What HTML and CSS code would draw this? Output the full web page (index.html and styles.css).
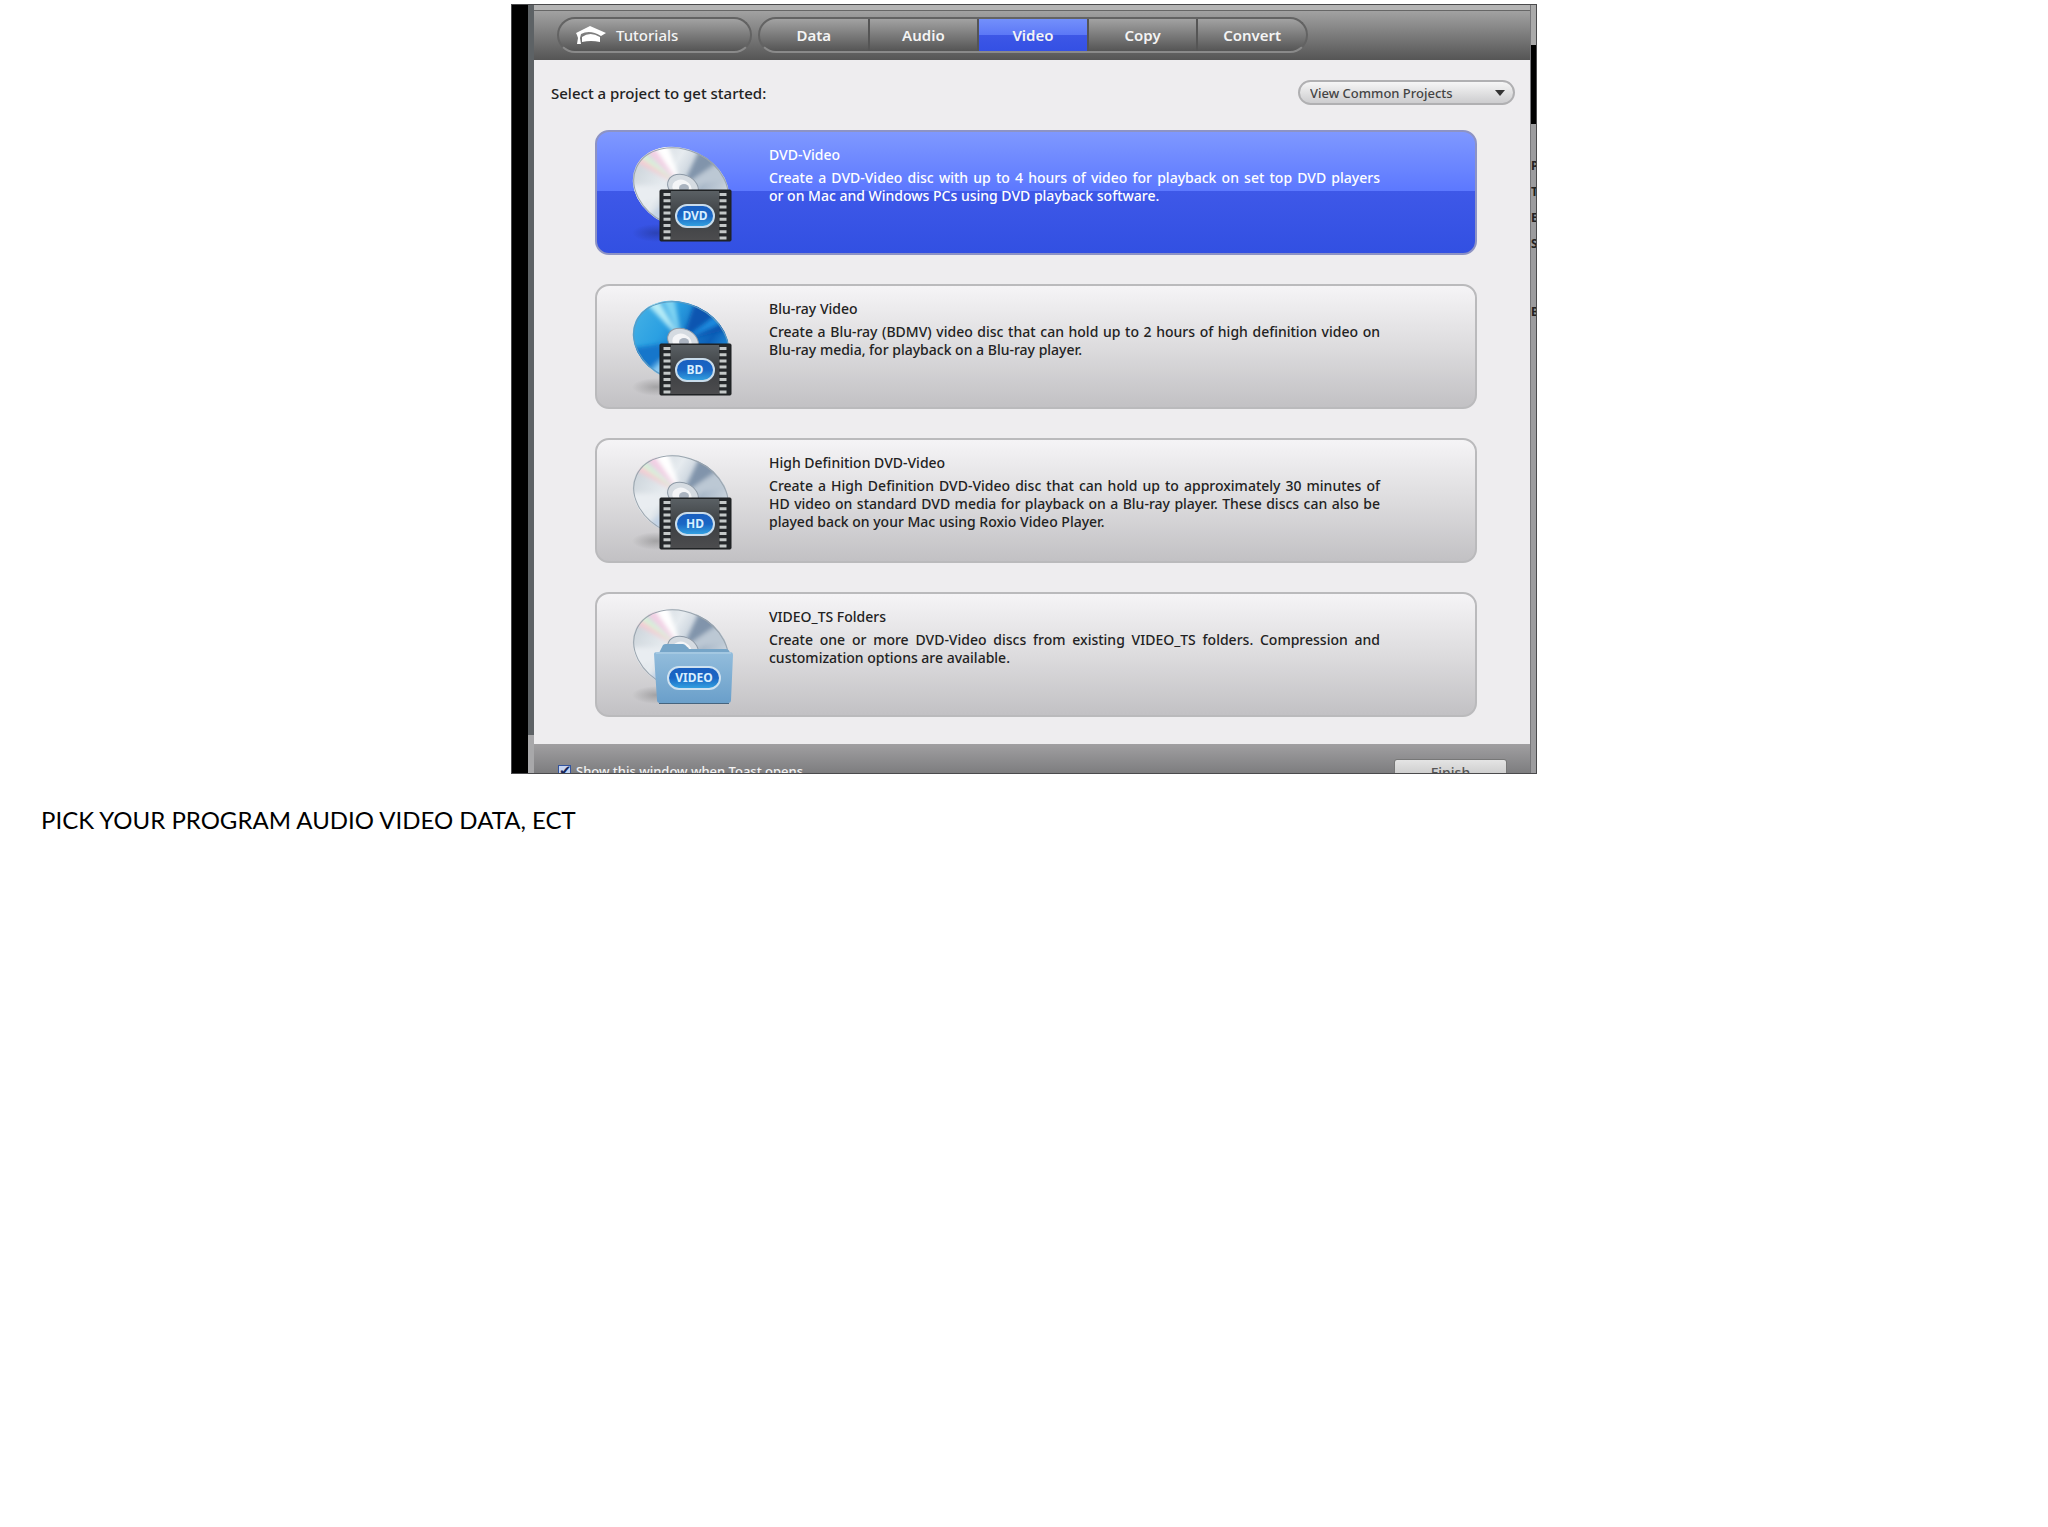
FILE: index.html
```html
<!DOCTYPE html>
<html lang="en">
<head>
    <meta charset="UTF-8">
    <meta name="viewport" content="width=device-width, initial-scale=1.0">
    <title>Pick your program</title>
    <link rel="stylesheet" href="styles.css">
</head>
<body>

    <!-- Shared icon parts -->
    <svg class="defs" width="0" height="0" aria-hidden="true">
        <defs>
            <linearGradient id="silver" x1="0" y1="0" x2="1" y2="0.6">
                <stop offset="0" stop-color="#c3ccd3"/>
                <stop offset="0.4" stop-color="#e6ebef"/>
                <stop offset="0.7" stop-color="#a9b8c8"/>
                <stop offset="1" stop-color="#dfe5ea"/>
            </linearGradient>
            <linearGradient id="blue" x1="0" y1="0" x2="1" y2="0.6">
                <stop offset="0" stop-color="#49b4e6"/>
                <stop offset="0.35" stop-color="#2ba0e2"/>
                <stop offset="0.75" stop-color="#0c60b8"/>
                <stop offset="1" stop-color="#2a9fe6"/>
            </linearGradient>
            <linearGradient id="pill" x1="0" y1="0" x2="0" y2="1">
                <stop offset="0" stop-color="#1a5fc0"/>
                <stop offset="0.5" stop-color="#1a66c4"/>
                <stop offset="1" stop-color="#35a5e2"/>
            </linearGradient>
            <linearGradient id="filmBase" x1="0" y1="0" x2="0" y2="1">
                <stop offset="0" stop-color="#5a6064"/>
                <stop offset="0.5" stop-color="#3c3f42"/>
                <stop offset="1" stop-color="#4c4c4e"/>
            </linearGradient>
            <linearGradient id="folderFront" x1="0" y1="0" x2="0" y2="1">
                <stop offset="0" stop-color="#93bddc"/>
                <stop offset="1" stop-color="#6a9fca"/>
            </linearGradient>
            <radialGradient id="shade">
                <stop offset="0" stop-color="#000" stop-opacity="0.2"/>
                <stop offset="1" stop-color="#000" stop-opacity="0"/>
            </radialGradient>
            <filter id="soft"><feGaussianBlur stdDeviation="2"/></filter>
            <clipPath id="discClip"><ellipse cx="49" cy="43" rx="50" ry="39" transform="rotate(25 49 43)"/></clipPath>

            <g id="hub">
                <ellipse cx="51" cy="42" rx="16" ry="12" transform="rotate(25 51 42)" fill="#d5dbe1" stroke="#8d99a6"/>
                <ellipse cx="50" cy="43" rx="10" ry="8" transform="rotate(25 50 43)" fill="#f4f5f7"/>
                <ellipse cx="52" cy="43" rx="5" ry="4" fill="#aab3bf"/>
            </g>
            <g id="silverDisc">
                <ellipse cx="24" cy="88" rx="24" ry="9" fill="url(#shade)"/>
                <g clip-path="url(#discClip)">
                    <rect width="102" height="98" fill="url(#silver)"/>
                    <g filter="url(#soft)">
                        <path d="M50 42 18 -4 34 -6Z" fill="#fff"/>
                        <path d="M50 42 12 4 19 -2Z" fill="#f3cfe4"/>
                        <path d="M50 42 2 16 6 9Z" fill="#f6cbd3"/>
                        <path d="M50 42 6 11 10 6Z" fill="#d8f3d9"/>
                        <path d="M50 42 68 4 90 14Z" fill="#8194ab"/>
                        <path d="M50 42 90 16 104 34Z" fill="#bcc8d4"/>
                        <path d="M50 42 -4 40 0 64Z" fill="#e9edf1"/>
                        <path d="M50 42 12 76 32 90Z" fill="#c3d3e6"/>
                    </g>
                </g>
                <ellipse cx="49" cy="43" rx="49" ry="38" transform="rotate(25 49 43)" fill="none" stroke="#9aa4ad"/>
                <use href="#hub"/>
            </g>
            <g id="blueDisc">
                <ellipse cx="24" cy="88" rx="24" ry="9" fill="url(#shade)"/>
                <g clip-path="url(#discClip)">
                    <rect width="102" height="98" fill="url(#blue)"/>
                    <g filter="url(#soft)">
                        <path d="M50 42 14 4 24 -4Z" fill="#b6ecf7"/>
                        <path d="M50 42 30 0 42 -2Z" fill="#7fd3f2"/>
                        <path d="M50 42 64 0 98 30Z" fill="#0a55b0"/>
                        <path d="M50 42 84 16 94 22Z" fill="#1b8ade"/>
                        <path d="M50 42 -6 50 8 76Z" fill="#1676cb"/>
                        <path d="M50 42 12 78 34 92Z" fill="#8cc9f3"/>
                    </g>
                </g>
                <ellipse cx="49" cy="43" rx="49" ry="38" transform="rotate(25 49 43)" fill="none" stroke="#5d9ac0"/>
                <use href="#hub"/>
            </g>
            <g id="film">
                <rect x="28" y="45" width="71" height="51" rx="1" fill="#25282b"/>
                <rect x="39" y="46" width="48" height="49" fill="url(#filmBase)"/>
                <path d="M35 48V95M91 48V95" stroke="#c4c8c8" stroke-width="7" stroke-dasharray="3 3.2"/>
                <rect x="28" y="45" width="71" height="51" rx="1" fill="none" stroke="#1c1e20"/>
                <rect x="44" y="60" width="38" height="22" rx="11" fill="url(#pill)" stroke="#c9dceb" stroke-width="2"/>
            </g>
            <g id="folder">
                <path d="M26 48 31 38Q32 37 34 37H51Q53 37 55 40L57 42H94Q97 42 98 46V60H26Z" fill="#76a5c8"/>
                <path d="M22 47Q22 45 25 45H98Q101 45 101 48L99 93Q99 96 96 96H28Q25 96 25 93Z" fill="url(#folderFront)"/>
                <path d="M27 96.500H97" stroke="#46647e"/>
                <path d="M24 46H99" stroke="#b4d3e8"/>
                <rect x="36" y="60" width="52" height="22" rx="11" fill="url(#pill)" stroke="#cfe2f0" stroke-width="2"/>
            </g>
        </defs>
    </svg>

    <main class="slide">
        <div class="screenshot">
            <div class="edge-black"></div>
            <div class="edge-left"></div>

            <div class="window">
                <nav class="toolbar">
                    <button class="tutorials" type="button">
                        <svg class="cap" viewBox="0 0 30 20" aria-hidden="true">
                            <path d="M0 8 14 1 30 8 25 11Q14 4 5 9L4 13 5 19H1L2 13 1 10Z" fill="#fff"/>
                            <path d="M6 12Q14 6 24 12V17Q15 15 6 17Z" fill="#fff"/>
                        </svg>
                        Tutorials
                    </button>
                    <div class="tabs">
                        <button class="tab" type="button">Data</button>
                        <button class="tab" type="button">Audio</button>
                        <button class="tab active" type="button">Video</button>
                        <button class="tab" type="button">Copy</button>
                        <button class="tab" type="button">Convert</button>
                    </div>
                </nav>

                <section class="content">
                    <div class="heading">
                        <label for="view">Select a project to get started:</label>
                        <div class="dropdown">
                            <select id="view">
                                <option>View Common Projects</option>
                            </select>
                        </div>
                    </div>

                    <div class="projects">
                        <button class="project selected" type="button">
                            <svg class="icon" viewBox="0 0 102 100" aria-hidden="true">
                                <use href="#silverDisc"/>
                                <use href="#film"/>
                                <text class="badge" x="63" y="75">DVD</text>
                            </svg>
                            <span class="details">
                                <span class="name">DVD-Video</span>
                                <span class="about">Create a DVD-Video disc with up to 4 hours of video for playback on set top DVD players <span class="keep">or on Mac</span> and Windows PCs using DVD playback software.</span>
                            </span>
                        </button>

                        <button class="project" type="button">
                            <svg class="icon" viewBox="0 0 102 100" aria-hidden="true">
                                <use href="#blueDisc"/>
                                <use href="#film"/>
                                <text class="badge" x="63" y="75">BD</text>
                            </svg>
                            <span class="details">
                                <span class="name">Blu-ray Video</span>
                                <span class="about">Create a Blu-ray (BDMV) video disc that can hold up to 2 hours of high definition video on <span class="keep">Blu-ray</span> media, for playback on a Blu-ray player.</span>
                            </span>
                        </button>

                        <button class="project" type="button">
                            <svg class="icon" viewBox="0 0 102 100" aria-hidden="true">
                                <use href="#silverDisc"/>
                                <use href="#film"/>
                                <text class="badge" x="63" y="75">HD</text>
                            </svg>
                            <span class="details">
                                <span class="name">High Definition DVD-Video</span>
                                <span class="about">Create a High Definition DVD-Video disc that can hold up to approximately 30 minutes of <span class="keep">HD video</span> on standard DVD media for playback on a Blu-ray player. These discs can also be <span class="keep">played back</span> on your Mac using Roxio Video Player.</span>
                            </span>
                        </button>

                        <button class="project" type="button">
                            <svg class="icon" viewBox="0 0 102 100" aria-hidden="true">
                                <use href="#silverDisc"/>
                                <use href="#folder"/>
                                <text class="badge" x="62" y="75">VIDEO</text>
                            </svg>
                            <span class="details">
                                <span class="name">VIDEO_TS Folders</span>
                                <span class="about">Create one or more DVD-Video discs from existing VIDEO_TS folders. Compression and customization options are available.</span>
                            </span>
                        </button>
                    </div>
                </section>

                <footer class="bottom">
                    <label class="show"><input type="checkbox" checked>Show this window when Toast opens</label>
                    <button class="finish" type="button">Finish</button>
                </footer>
            </div>

            <!-- Sliver of the window behind -->
            <div class="edge-right">
                <span>P</span>
                <span>T</span>
                <span>E</span>
                <span>S</span>
                <span class="last">B</span>
            </div>
        </div>

        <p class="caption">PICK YOUR PROGRAM AUDIO VIDEO DATA, ECT</p>
    </main>

</body>
</html>
```

FILE: styles.css
```css
* {
    box-sizing: border-box;
}
body {
    margin: 0;
    background: #fff;
    font-family: "Noto Sans", "Open Sans", sans-serif;
    font-size: 14px;
    color: #222;
}
button, select, input {
    font-family: inherit;
    margin: 0;
}
.defs {
    position: absolute;
}
.slide {
    padding-top: 4px;
}
.screenshot {
    display: flex;
    width: 100%;
    max-width: 1026px;
    aspect-ratio: 4 / 3;
    margin: 0 auto;
    border: 1px solid #4a4a4c;
    overflow: hidden;
}
.edge-black {
    width: 16px;
    background: #000;
}
.edge-left {
    width: 6px;
    background: linear-gradient(#5d6265 95%, #a8a8aa 95%);
}
.edge-right {
    width: 6px;
    padding-top: 148px;
    background: linear-gradient(#aaa 40px, #000 40px, #000 119px, #9c9c9e 119px);
    border-left: 1px solid #77777a;
    overflow: hidden;
    font-size: 12px;
    line-height: 26px;
    font-weight: bold;
}
.edge-right span {
    display: block;
}
.edge-right .last {
    margin-top: 42px;
}
.window {
    flex: 1;
    min-width: 0;
}

/* Toolbar */
.toolbar {
    display: flex;
    gap: 6px;
    height: 55px;
    padding: 6px 23px 0;
    border-top: 5px solid #b4b4b4;
    box-shadow: inset 0 1px #666;
    background: linear-gradient(#a3a3a3, #555);
}
.tutorials, .tabs {
    height: 36px;
    margin-top: 1px;
    border: 2px solid #636363;
    border-bottom-color: #8a8a8a;
    border-radius: 18px;
    background: linear-gradient(#a2a2a2, #555);
}
.tutorials {
    display: flex;
    align-items: center;
    gap: 10px;
    width: 195px;
    padding: 0 17px;
    color: #f4f4f4;
    font-size: 15px;
    font-weight: 500;
}
.cap {
    width: 30px;
    height: 20px;
}
.tabs {
    display: flex;
    flex: 0 1 550px;
    overflow: hidden;
}
.tab {
    flex: 1;
    padding: 0;
    border: 0;
    border-left: 2px solid #555;
    background: none;
    color: #f4f4f4;
    font-size: 15px;
    font-weight: 600;
}
.tab:first-child {
    border-left: 0;
}
.tab.active {
    background: linear-gradient(#7390fb, #5c78f6 50%, #3d57e6 50%, #3450e4);
}

/* Content */
.content {
    padding: 20px 15px 27px 17px;
    background: #eeedef;
}
.heading {
    display: flex;
    align-items: center;
    justify-content: space-between;
    font-weight: 500;
    font-size: 15px;
    line-height: 24px;
}
.dropdown {
    position: relative;
    width: 217px;
}
.dropdown::after {
    content: "";
    position: absolute;
    top: 10px;
    right: 10px;
    border: 5px solid transparent;
    border-top: 6px solid #333;
    border-bottom: 0;
}
select {
    appearance: none;
    display: block;
    width: 100%;
    height: 25px;
    padding: 0 10px;
    border: 2px solid #b0b0b2;
    border-radius: 13px;
    background: linear-gradient(#f6f6f6, #cdcdcf);
    color: #444;
    font-size: 13px;
    font-weight: 500;
}
.projects {
    display: flex;
    flex-direction: column;
    gap: 29px;
    padding: 25px 38px 0 44px;
}
.project {
    display: flex;
    align-items: flex-start;
    gap: 35px;
    min-height: 125px;
    padding: 13px 95px 8px 35px;
    border: 2px solid #bababc;
    border-radius: 14px;
    background: linear-gradient(#f5f4f6, #dddcde 50%, #c2c1c4);
    color: #222;
    text-align: left;
    font-size: 14px;
    font-weight: 500;
    line-height: 18px;
}
.project.selected {
    border-color: #8d93c4;
    background: linear-gradient(#7f98ff, #5c78ff 49%, #3e58e8 49%, #3250e2);
    color: #fff;
}
.icon {
    flex: none;
    width: 102px;
    height: 100px;
}
.badge {
    fill: #d8efff;
    font-size: 12px;
    font-weight: bold;
    text-anchor: middle;
}
.details {
    flex: 1;
    min-width: 0;
    padding-top: 1px;
}
.name, .about {
    display: block;
}
.name {
    margin-bottom: 5px;
}
.about {
    text-align: justify;
}
.keep {
    white-space: nowrap;
}

/* Bottom bar */
.bottom {
    display: flex;
    justify-content: space-between;
    align-items: flex-start;
    height: 64px;
    padding: 15px 23px 0 24px;
    background: linear-gradient(#a09fa1, #7c7c7e 30px, #666);
}
.show {
    display: flex;
    align-items: center;
    gap: 5px;
    color: #f4f4f4;
    font-size: 13px;
    font-weight: 500;
    line-height: 24px;
}
.show input {
    appearance: none;
    width: 13px;
    height: 13px;
    background: #c5d4f2;
    border: 1px solid #34549c;
}
.show input:checked::before {
    content: "✔";
    display: block;
    color: #16285c;
    font-size: 15px;
    line-height: 8px;
}
.finish {
    width: 113px;
    height: 28px;
    padding: 0;
    border: 1px solid #777;
    border-radius: 3px;
    background: linear-gradient(#e4e4e4, #bbb);
    color: #555;
    font-size: 14px;
    font-weight: 500;
    line-height: 22px;
}

.caption {
    margin: 30px 41px;
    color: #000;
    font-family: Lato, sans-serif;
    font-size: 24px;
    line-height: 32px;
}
```
